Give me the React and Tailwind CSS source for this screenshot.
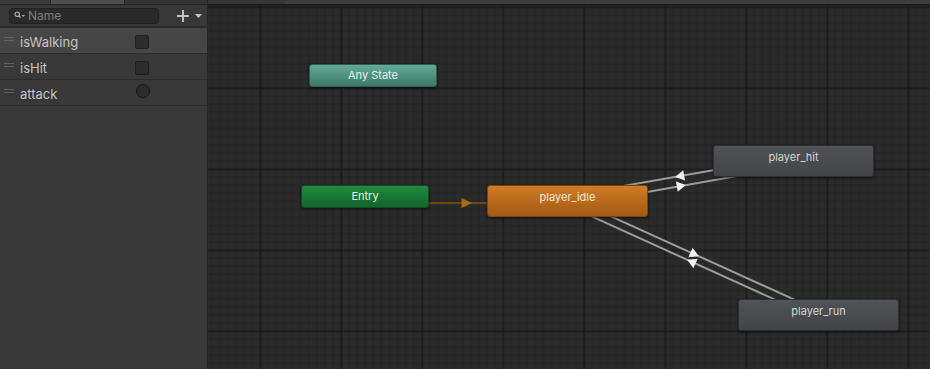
import React from "react";

const GX = 208;

function Grid() {
  const minors = [];
  for (let i = 1; i < 10; i++) {
    const p = +(i * 8.1).toFixed(2);
    minors.push(<rect key={"v" + i} x={p} y={0} width="1" height="81" fill="#232323" />);
    minors.push(<rect key={"h" + i} x={0} y={p} width="81" height="1" fill="#232323" />);
  }
  return (
    <pattern id="grid" patternUnits="userSpaceOnUse" width="81" height="81" x="51.5" y="6.5">
      <rect width="81" height="81" fill="#2b2b2b" />
      {minors}
      <rect x="0" y="0" width="1.6" height="81" fill="#1a1a1a" />
      <rect x="0" y="0" width="81" height="1.6" fill="#1a1a1a" />
    </pattern>
  );
}

function edgePair(a, b, off) {
  const dx = b[0] - a[0];
  const dy = b[1] - a[1];
  const L = Math.hypot(dx, dy);
  const u = [dx / L, dy / L];
  const n = [-u[1], u[0]];
  const mk = (s) => {
    const o = [n[0] * off * s, n[1] * off * s];
    return {
      x1: a[0] + o[0],
      y1: a[1] + o[1],
      x2: b[0] + o[0],
      y2: b[1] + o[1],
      mx: (a[0] + b[0]) / 2 + o[0],
      my: (a[1] + b[1]) / 2 + o[1],
    };
  };
  return { u, n, pos: mk(1), neg: mk(-1) };
}

function arrow(mx, my, u, n, dir, key) {
  const l = 4.6;
  const w = 5.2;
  const ux = u[0] * dir;
  const uy = u[1] * dir;
  const tip = [mx + ux * l, my + uy * l];
  const b1 = [mx - ux * l + n[0] * w, my - uy * l + n[1] * w];
  const b2 = [mx - ux * l - n[0] * w, my - uy * l - n[1] * w];
  return (
    <polygon
      key={key}
      points={`${tip[0]},${tip[1]} ${b1[0]},${b1[1]} ${b2[0]},${b2[1]}`}
      fill="#f2f2f2"
    />
  );
}

function Edges() {
  const idle = [567.5 - GX, 201];
  const hit = [793.5 - GX, 161];
  const run = [818.5 - GX, 315];
  const h = edgePair(idle, hit, 5);
  const r = edgePair(idle, run, 4);
  const lineProps = { stroke: "#9c9c9c", strokeWidth: 2 };
  return (
    <g>
      <line x1={221} y1={203} x2={280} y2={203} stroke="#6e4810" strokeWidth="2" />
      <polygon points="253.5,198 264,203 253.5,208" fill="#a86c10" />

      <line {...h.neg} {...lineProps} />
      <line {...h.pos} {...lineProps} />
      {arrow(h.neg.mx, h.neg.my, h.u, h.n, -1, "h1")}
      {arrow(h.pos.mx, h.pos.my, h.u, h.n, 1, "h2")}

      <line {...r.neg} {...lineProps} />
      <line {...r.pos} {...lineProps} />
      {arrow(r.neg.mx, r.neg.my, r.u, r.n, 1, "r1")}
      {arrow(r.pos.mx, r.pos.my, r.u, r.n, -1, "r2")}
    </g>
  );
}

function ParamRow({ name, selected, kind }) {
  return (
    <div
      className={
        selected
          ? "relative flex h-[26px] items-start border-b border-[#2c2c2c] bg-[#464646]"
          : "relative flex h-[26px] items-start border-b border-[#2c2c2c] bg-[#383838]"
      }
    >
      <div className="absolute left-[4px] top-[9px] flex w-[10px] flex-col gap-[2px]">
        <div className="h-px bg-[#616161]" />
        <div className="h-px bg-[#616161]" />
      </div>
      <span className="ml-[20px] mt-[6px] w-[115px] text-[13px] leading-[16px] text-[#c4c4c4]">{name}</span>
      {kind === "bool" ? (
        <div className="mt-[7px] h-[14px] w-[14px] rounded-[2px] border border-[#1e1e1e] bg-[#2c2c2c]" />
      ) : (
        <div className="ml-px mt-[4px] h-[14px] w-[14px] rounded-full border border-[#161616] bg-[#2c2c2c]" />
      )}
    </div>
  );
}

export default function App() {
  return (
    <div className="flex h-[369px] w-[930px] overflow-hidden bg-[#2b2b2b] font-['Inter','Noto_Sans',sans-serif]">
      {/* Left parameters panel */}
      <aside className="flex w-[208px] shrink-0 flex-col border-r border-[#262626] bg-[#383838]">
        <div className="flex h-[5px] border-b border-[#232323]">
          <div className="w-[51px] border-r border-[#262626] bg-[#3a3a3a]" />
          <div className="w-[74px] border-r border-[#262626] bg-[#4e4e4e]" />
          <div className="flex-1 bg-[#333333]" />
        </div>
        <div className="flex h-[23px] items-center border-b-2 border-[#2b2b2b] pl-[9px] pr-[5px]">
          <div className="flex h-[16px] w-[152px] items-center rounded-[4px] border border-[#212121] bg-[#2a2a2a]">
            <svg width="12" height="9" viewBox="0 0 12 9" className="ml-[4px]">
              <circle cx="3.2" cy="3.2" r="2.2" fill="none" stroke="#b0b0b0" strokeWidth="1.2" />
              <line x1="4.8" y1="4.8" x2="6.6" y2="6.6" stroke="#b0b0b0" strokeWidth="1.3" />
              <polygon points="7.5,4 11,4 9.25,6" fill="#b0b0b0" />
            </svg>
            <span className="ml-[2px] text-[12px] leading-[14px] text-[#7c7c7c]">Name</span>
          </div>
          <svg width="12" height="12" viewBox="0 0 12 12" className="ml-[18px]">
            <rect x="5" y="0" width="2" height="12" fill="#c8c8c8" />
            <rect x="0" y="5" width="12" height="2" fill="#c8c8c8" />
          </svg>
          <svg width="7" height="4" viewBox="0 0 7 4" className="ml-[6px]">
            <polygon points="0,0 7,0 3.5,4" fill="#c4c4c4" />
          </svg>
        </div>
        <ParamRow name="isWalking" selected kind="bool" />
        <ParamRow name="isHit" kind="bool" />
        <ParamRow name="attack" kind="trigger" />
        <div className="flex-1" />
      </aside>

      {/* Graph */}
      <main className="relative flex-1 overflow-hidden">
        <svg className="absolute inset-0" width="722" height="369">
          <defs>
            <Grid />
          </defs>
          <rect x="0" y="0" width="722" height="369" fill="url(#grid)" />
          <Edges />
        </svg>

        <div className="relative flex h-[5px] border-b border-[#1c1c1c] bg-[#3e3e3e]">
          <div className="w-[80px] bg-[#383838] [clip-path:polygon(0_0,100%_0,94%_100%,0_100%)]" />
        </div>
        <div className="relative h-[3px] bg-linear-to-b from-[#1a1a1a]/70 to-transparent" />

        {/* Nodes */}
        <div className="absolute left-[101px] top-[64px] flex h-[23px] w-[128px] items-center justify-center rounded-[3px] border border-[#2f5d51] bg-linear-to-b from-[#62aa95] to-[#3d7a69] text-[11px] text-[#e6efec] shadow-[0_1px_3px_rgba(0,0,0,0.6)]">
          Any State
        </div>
        <div className="absolute left-[93px] top-[185px] flex h-[23px] w-[128px] items-center justify-center rounded-[3px] border border-[#0f4d22] bg-linear-to-b from-[#1f8b3f] to-[#12652b] text-[11px] text-[#e4efe6] shadow-[0_1px_3px_rgba(0,0,0,0.6)]">
          Entry
        </div>
        <div className="absolute left-[279px] top-[185px] flex h-[32px] w-[161px] justify-center rounded-[3px] border border-[#7a4510] bg-linear-to-b from-[#d07c26] to-[#a45910] pt-[4px] text-[11px] leading-[14px] text-[#f3e9de] shadow-[0_1px_3px_rgba(0,0,0,0.6)]">
          player_idle
        </div>
        <div className="absolute left-[505px] top-[145px] flex h-[32px] w-[161px] justify-center rounded-[3px] border border-[#2f3033] bg-linear-to-b from-[#515357] to-[#424447] pt-[4px] text-[11px] leading-[14px] text-[#d4d4d4] shadow-[0_1px_3px_rgba(0,0,0,0.6)]">
          player_hit
        </div>
        <div className="absolute left-[530px] top-[299px] flex h-[32px] w-[161px] justify-center rounded-[3px] border border-[#2f3033] bg-linear-to-b from-[#515357] to-[#424447] pt-[4px] text-[11px] leading-[14px] text-[#d4d4d4] shadow-[0_1px_3px_rgba(0,0,0,0.6)]">
          player_run
        </div>
      </main>
    </div>
  );
}
